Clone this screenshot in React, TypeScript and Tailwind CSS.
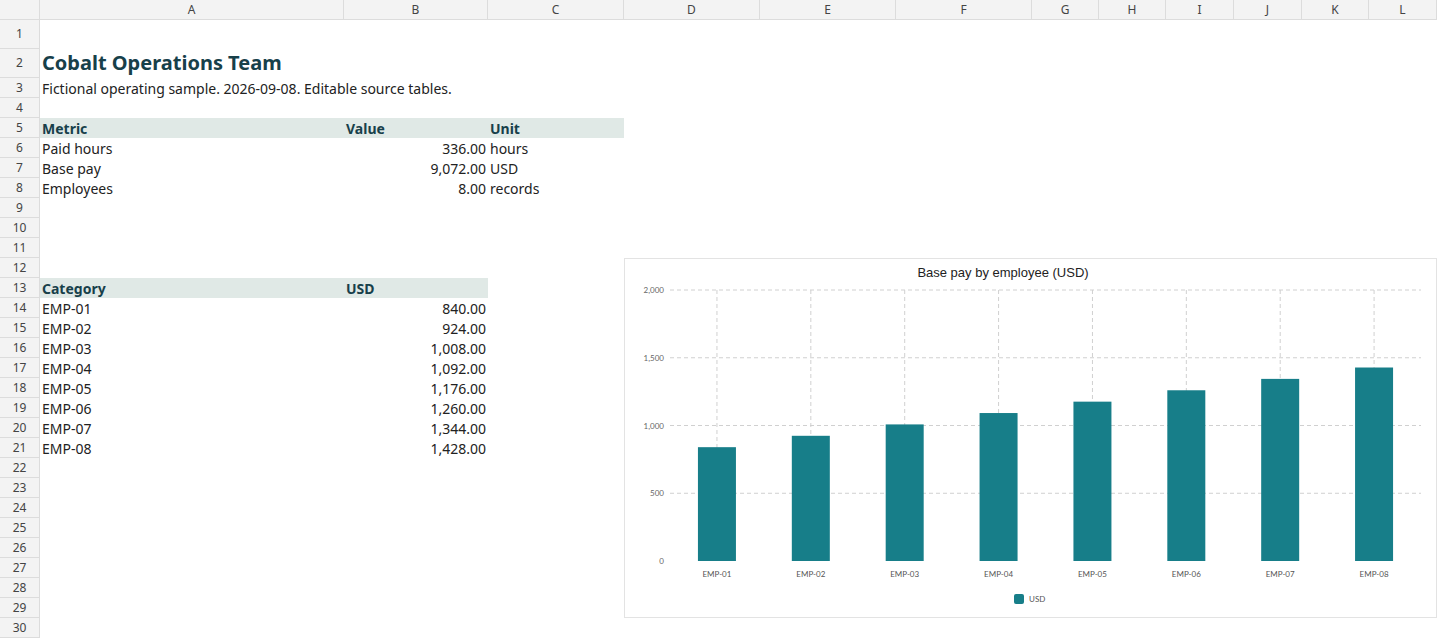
const cols = [["A","w-[304px]"],["B","w-[144px]"],["C","w-[136px]"],["D","w-[136px]"],["E","w-[136px]"],["F","w-[136px]"],["G","w-[67px]"],["H","w-[67px]"],["I","w-[68px]"],["J","w-[68px]"],["K","w-[67px]"],["L","w-[68px]"]] as const;
const rowCls = (r:number)=> r===1||r===2 ? "h-[29px]" : "h-[20px]";
type Cell = {t:string; cls?:string};
const hdr="font-bold text-[#17404a] bg-[#e0e9e6]";
const cells: Record<number, Record<string, Cell>> = {
  2:{A:{t:"Cobalt Operations Team",cls:"text-[20px] font-bold text-[#17404a] whitespace-nowrap items-end"}},
  3:{A:{t:"Fictional operating sample. 2026-09-08. Editable source tables.",cls:"whitespace-nowrap"}},
  5:{A:{t:"Metric",cls:hdr},B:{t:"Value",cls:hdr},C:{t:"Unit",cls:hdr}},
  6:{A:{t:"Paid hours"},B:{t:"336.00",cls:"justify-end"},C:{t:"hours"}},
  7:{A:{t:"Base pay"},B:{t:"9,072.00",cls:"justify-end"},C:{t:"USD"}},
  8:{A:{t:"Employees"},B:{t:"8.00",cls:"justify-end"},C:{t:"records"}},
  13:{A:{t:"Category",cls:hdr},B:{t:"USD",cls:hdr}},
};
const vals=[840,924,1008,1092,1176,1260,1344,1428];
vals.forEach((v,i)=>{cells[14+i]={A:{t:`EMP-0${i+1}`},B:{t:v.toLocaleString("en-US",{minimumFractionDigits:2}),cls:"justify-end"}}});

function Chart(){
  const x0=45, pw=751, y0=302, yTop=31, h=y0-yTop;
  return (
    <div className="absolute left-[624px] top-[258px] w-[813px] h-[360px] bg-white border border-[#e3e3e3]">
      <svg width="813" height="360" className="block" fontFamily="Lato, sans-serif">
        <text x="378" y="18" textAnchor="middle" fontSize="13" fill="#222" fontFamily="'Liberation Sans', Arial, sans-serif">Base pay by employee (USD)</text>
        {[0,500,1000,1500,2000].map(t=>{const y=y0-t/2000*h;return <g key={t}>
          {t>0&&<line x1={x0} x2={x0+pw} y1={y} y2={y} stroke="#d0d0d0" strokeDasharray="4 3"/>}
          <text x={39} y={y+3} textAnchor="end" fontSize="8" fill="#666">{t.toLocaleString("en-US")}</text></g>})}
        {vals.map((v,i)=>{const cx=x0+pw/16+i*pw/8;const bh=v/2000*h;return <g key={i}>
          <line x1={cx} x2={cx} y1={yTop} y2={y0} stroke="#d0d0d0" strokeDasharray="4 3"/>
          <rect x={cx-19} y={y0-bh} width={38} height={bh} fill="#177e89"/>
          <text x={cx} y={y0+16} textAnchor="middle" fontSize="8" fill="#555">EMP-0{i+1}</text></g>})}
        <rect x={389} y={335} width={10} height={10} rx={2} fill="#177e89"/>
        <text x={404} y={343} fontSize="8" fill="#555">USD</text>
      </svg>
    </div>
  );
}

export default function App(){
  const rows=Array.from({length:30},(_,i)=>i+1);
  return (
    <div className="relative w-[1437px] h-[639px] overflow-hidden bg-white text-[14px] text-[#222] font-['Liberation_Sans',Arial,sans-serif]">
      <div className="flex h-[20px] bg-[#f3f3f3] border-b border-[#dcdcdc]">
        <div className="w-[40px] shrink-0 border-r border-[#dcdcdc]"/>
        {cols.map(([c,w])=><div key={c} className={`${w} shrink-0 border-r border-[#dcdcdc] text-[12px] text-[#444] flex items-center justify-center`}>{c}</div>)}
      </div>
      {rows.map(r=>(
        <div key={r} className={`flex ${rowCls(r)}`}>
          <div className="w-[40px] shrink-0 bg-[#f3f3f3] border-r border-b border-[#dcdcdc] text-[12px] text-[#444] flex items-center justify-center">{r}</div>
          {cols.map(([c,w])=>{const cell=cells[r]?.[c];return <div key={c} className={`${w} shrink-0 px-[2px] flex items-center ${cell?.cls??""}`}>{cell?.t}</div>})}
        </div>
      ))}
      <Chart/>
    </div>
  );
}
